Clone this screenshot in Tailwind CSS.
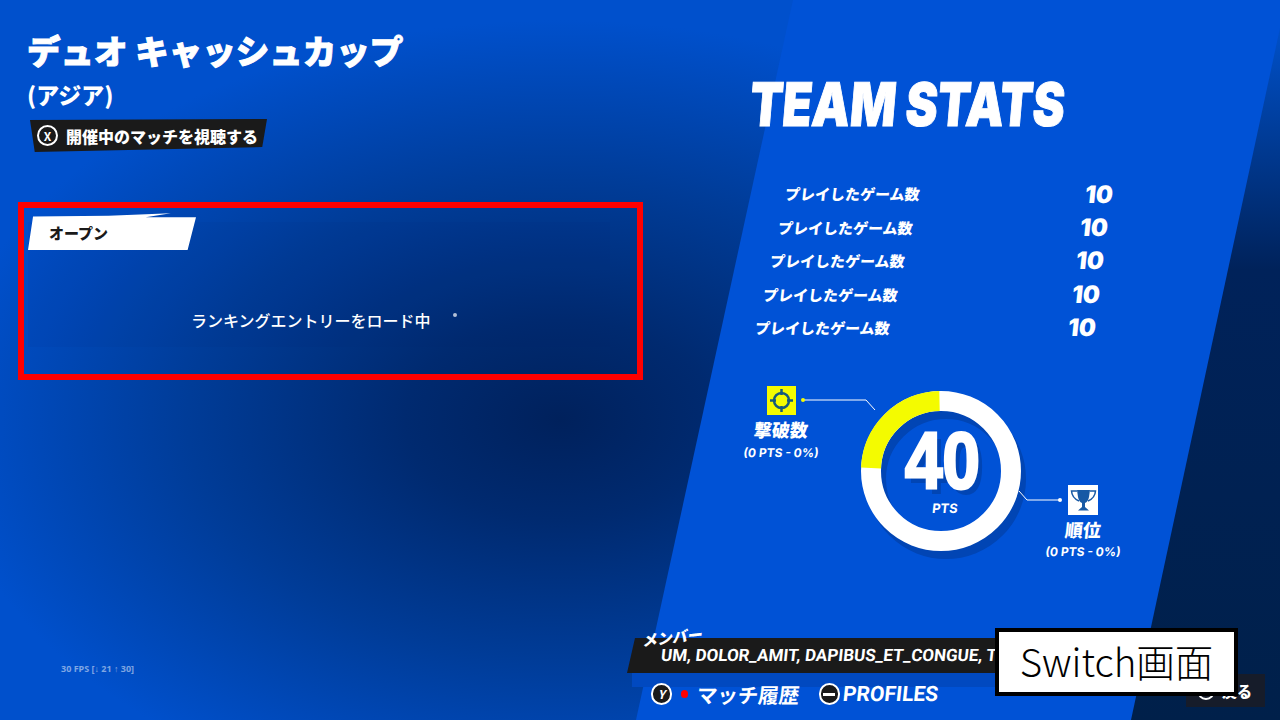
<!DOCTYPE html>
<html lang="ja">

<head>
  <meta charset="UTF-8" />
  <meta name="viewport" content="width=device-width, initial-scale=1.0" />
  <title>Team Stats</title>
  <script src="https://cdn.jsdelivr.net/npm/@tailwindcss/browser@4"></script>
</head>

<body class="bg-black">
  <div class="relative flex w-[1280px] h-[720px] overflow-hidden text-white font-['Noto_Sans_CJK_JP','Noto_Sans',sans-serif] bg-[radial-gradient(ellipse_620px_400px_at_560px_420px,#00215c_0%,#002a70_25%,#003c98_60%,#0050cc_100%)]">
    <!-- dark corner behind the panel -->
    <div class="absolute inset-0 bg-[linear-gradient(180deg,#0050c8_30px,#00225a_270px,#00204a_100%)] [clip-path:polygon(1280px_20px,1280px_720px,1120px_720px)]"></div>
    <!-- slanted light panel -->
    <div class="absolute inset-0 bg-[#0052d6] [clip-path:polygon(793px_0,1280px_0,1280px_28px,1131px_720px,636px_720px)]"></div>

    <!-- left column -->
    <div class="relative w-[640px] flex flex-col shrink-0">
      <div class="pl-[27px] pt-[28px]">
        <h1 class="text-[33.500px] leading-[44px] font-black whitespace-nowrap [-webkit-text-stroke:1px_#fff]">デュオ キャッシュカップ</h1>
        <p class="mt-[7px] text-[23px] leading-[30px] font-black">(アジア)</p>
      </div>
      <div class="ml-[30px] mt-[10px] w-[237px] h-[33px] flex items-center gap-[8px] pl-[7px] bg-[#1a1a1a] [clip-path:polygon(0_3%,100%_0,98%_85%,2%_100%)]">
        <span class="w-[21px] h-[21px] rounded-full border-2 border-white flex items-center justify-center text-[12px] font-bold leading-none">X</span>
        <span class="text-[16px] font-black leading-none whitespace-nowrap">開催中のマッチを視聴する</span>
      </div>

      <div class="relative ml-[18px] mt-[50px] w-[625px] h-[178px] border-[6px] border-[#ff0000]">
        <div class="absolute left-[4px] top-[14px] w-[582px] h-[125px] bg-[#001a60]/5"></div>
        <div class="relative w-[168px] h-[38px] ml-[4px] mt-[4px] flex items-center pl-[21px] bg-white [clip-path:polygon(3%_12%,48%_10%,85%_3%,70%_14%,100%_14%,95%_100%,0_100%)]">
          <span class="text-[15px] font-black text-[#1a1a1a] leading-none pt-[3px]">オープン</span>
        </div>
        <div class="relative flex items-center mt-[59px] pl-[167px]">
          <span class="text-[16px] leading-[22px] font-medium whitespace-nowrap">ランキングエントリーをロード中</span>
          <span class="w-[4px] h-[4px] ml-[22px] -mt-[11px] rounded-full bg-white/70"></span>
        </div>
      </div>

      <div class="mt-auto mb-[45px] ml-[61px] text-[9px] leading-[12px] font-bold text-white/50 font-['Noto_Sans',sans-serif]">30 FPS [↓ 21 ↑ 30]</div>
    </div>

    <!-- right column -->
    <div class="relative flex-1 flex flex-col">
      <h2 class="ml-[110px] mt-[71px] text-[60px] leading-[66px] font-black origin-left scale-x-[.8] -skew-x-6 whitespace-nowrap font-['Inter',sans-serif] [-webkit-text-stroke:1px_#fff]">TEAM STATS</h2>

      <div class="mt-[41px] flex flex-col text-[15px] font-black">
        <div class="flex h-[33.4px] items-center ml-[145px]"><span class="w-[300px] -skew-x-6">プレイしたゲーム数</span><span class="text-[24px] font-black -skew-x-6 font-['Inter',sans-serif]">10</span></div>
        <div class="flex h-[33.4px] items-center ml-[138px]"><span class="w-[302px] -skew-x-6">プレイしたゲーム数</span><span class="text-[24px] font-black -skew-x-6 font-['Inter',sans-serif]">10</span></div>
        <div class="flex h-[33.4px] items-center ml-[130px]"><span class="w-[306px] -skew-x-6">プレイしたゲーム数</span><span class="text-[24px] font-black -skew-x-6 font-['Inter',sans-serif]">10</span></div>
        <div class="flex h-[33.4px] items-center ml-[123px]"><span class="w-[309px] -skew-x-6">プレイしたゲーム数</span><span class="text-[24px] font-black -skew-x-6 font-['Inter',sans-serif]">10</span></div>
        <div class="flex h-[33.4px] items-center ml-[115px]"><span class="w-[313px] -skew-x-6">プレイしたゲーム数</span><span class="text-[24px] font-black -skew-x-6 font-['Inter',sans-serif]">10</span></div>
      </div>

      <!-- donut diagram, canvas origin at 730,375 -->
      <div class="absolute left-[90px] top-[375px] w-[400px] h-[195px]">
        <svg class="absolute inset-0" width="400" height="195" viewBox="0 0 400 195" fill="none">
          <circle cx="216" cy="104" r="70" stroke="#0145b4" stroke-width="20" />
          <circle cx="211" cy="96" r="70" stroke="#fff" stroke-width="20" />
          <path d="M209.5 26 A70 70 0 0 0 141 93" stroke="#f4fb00" stroke-width="20" />
          <path d="M73 25 H136 L145 35" stroke="#fff" stroke-width="1" />
          <circle cx="73" cy="25" r="2" fill="#f4fb00" />
          <path d="M289 116 L297 125 H330" stroke="#fff" stroke-width="1" />
          <circle cx="330" cy="125" r="2" fill="#fff" />
          <rect x="37" y="11" width="29" height="29" fill="#f4fb00" />
          <g stroke="#15597c" stroke-width="2.500">
            <circle cx="51.500" cy="25.500" r="7.500" />
            <path d="M51.500 14V20M51.500 31V37M40 25.500H46M57 25.500H63" />
          </g>
          <rect x="338" y="110" width="30" height="30" fill="#fff" />
          <path d="M347 115H360L359 122Q358 127 355 128V132L359 135.500H348L352 132V128Q349 127 348 122Z" fill="#1759a5" />
          <path d="M347 116H341.500Q342 123 349 126M360 116H365.500Q365 123 358 126" stroke="#1759a5" stroke-width="1.500" />
        </svg>
        <div class="absolute left-[168px] top-[46px] w-[88px] text-center text-[80px] leading-[80px] font-bold scale-x-[.84] font-['Liberation_Sans',sans-serif] [-webkit-text-stroke:3px_#fff] [text-shadow:6px_6px_0_#0145b4]">40</div>
        <div class="absolute left-[175px] top-[124px] w-[80px] text-center text-[13px] leading-[18px] font-bold -skew-x-6 font-['Inter',sans-serif]">PTS</div>
        <div class="absolute left-[0px] top-[41px] w-[102px] text-center text-[18px] leading-[26px] font-black -skew-x-6">撃破数</div>
        <div class="absolute left-[0px] top-[69px] w-[102px] text-center text-[12px] leading-[18px] font-bold -skew-x-6 whitespace-nowrap font-['Inter',sans-serif]">(0 PTS - 0%)</div>
        <div class="absolute left-[302px] top-[141px] w-[102px] text-center text-[18px] leading-[26px] font-black -skew-x-6">順位</div>
        <div class="absolute left-[302px] top-[168px] w-[102px] text-center text-[12px] leading-[18px] font-bold -skew-x-6 whitespace-nowrap font-['Inter',sans-serif]">(0 PTS - 0%)</div>
      </div>

      <!-- footer -->
      <div class="absolute left-[-8px] top-[672px] w-[380px] h-[15px] bg-[#0149c0]"></div>
      <div class="absolute left-[-13px] top-[638px] w-[400px] h-[35px] flex items-center pl-[34px] bg-[#1a1a1a] overflow-hidden [clip-path:polygon(2%_0,100%_0,100%_100%,0_100%)]">
        <span class="text-[17px] font-bold -skew-x-6 whitespace-nowrap font-['Roboto',sans-serif]">UM, DOLOR_AMIT, DAPIBUS_ET_CONGUE, TI</span>
      </div>
      <div class="absolute left-[3px] top-[627px] text-[15px] leading-[20px] font-black -skew-x-12 -rotate-6">メンバー</div>
      <div class="absolute left-[11px] top-[683px] flex items-center h-[22px]">
        <span class="w-[21px] h-[22px] rounded-full border-2 border-white bg-[#1a1a1a] flex items-center justify-center text-[12px] font-bold italic leading-none">Y</span>
        <span class="w-[7px] h-[8px] ml-[9px] rounded-full bg-[#ff0000]"></span>
        <span class="ml-[9px] text-[20.500px] leading-[22px] font-bold -skew-x-6 whitespace-nowrap">マッチ履歴</span>
        <span class="w-[21px] h-[22px] ml-[19px] rounded-full border-2 border-white bg-[#1a1a1a] flex items-center justify-center"><span class="w-[12px] h-[3px] bg-white"></span></span>
        <span class="ml-[3px] text-[21px] leading-[22px] font-bold -skew-x-6 whitespace-nowrap font-['Roboto',sans-serif]">PROFILES</span>
      </div>
      <div class="absolute left-[546px] top-[674px] w-[79px] h-[33px] flex items-center pl-[11px] gap-[7px] bg-[#161c2a]">
        <span class="w-[18px] h-[18px] rounded-full border-2 border-white"></span>
        <span class="text-[15px] font-black leading-none whitespace-nowrap">戻る</span>
      </div>
    </div>

    <!-- caption over the screenshot -->
    <div class="absolute left-[995px] top-[628px] w-[243px] h-[68px] flex items-center justify-center pb-[3px] bg-white border-[4px] border-black text-black text-[38.500px] font-light leading-none">Switch画面</div>
  </div>
</body>

</html>
